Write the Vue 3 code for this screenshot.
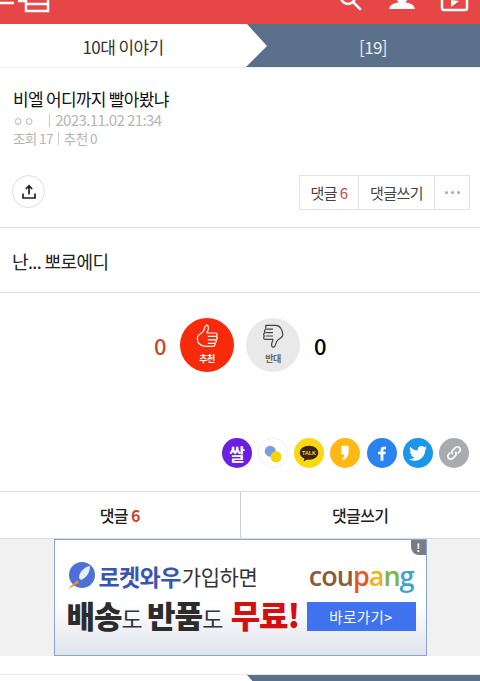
<template>
  <div class="page">
    <header class="topbar">
      <svg class="logo" width="60" height="24" viewBox="0 0 60 24" fill="none" stroke="#fff" stroke-width="2.500">
        <path d="M0 3H14" />
        <path d="M18 1H27" />
        <path d="M26 0V11H48V0" />
        <path d="M27 4H47" />
      </svg>
      <div class="top-icons">
        <svg width="28" height="24" viewBox="0 0 28 24" fill="none" stroke="#fff" stroke-width="2.500">
          <circle cx="11" cy="-3" r="7" />
          <path d="M16 2L23 9" stroke-linecap="round" />
        </svg>
        <svg width="26" height="24" viewBox="0 0 26 24" fill="#fff">
          <circle cx="13" cy="-3" r="6" />
          <path d="M0 9C1 4 7 2 13 2S25 4 26 9Z" />
        </svg>
        <svg width="30" height="24" viewBox="0 0 30 24" fill="none" stroke="#fff" stroke-width="2.500">
          <path d="M3 -2V8Q3 10 5 10H26Q28 10 28 8V-2" />
          <path d="M12 0V7L20 1Z" fill="#fff" stroke="none" />
        </svg>
      </div>
    </header>

    <nav class="crumb">
      <div class="crumb-left">10대 이야기</div>
      <div class="crumb-right">
        <svg class="arrow" width="22" height="43" viewBox="0 0 22 43"><path d="M0 0H1L21 22L0 43Z" fill="#fff" /></svg>
        <span>[19]</span>
      </div>
    </nav>

    <section class="head">
      <h1>비엘 어디까지 빨아봤냐</h1>
      <p class="meta"><span class="nick">ㅇㅇ</span><i class="bar"></i>2023.11.02 21:34</p>
      <p class="meta second">조회 17<i class="bar small"></i>추천 0</p>
    </section>

    <section class="actions">
      <button class="share" aria-label="공유">
        <svg width="16" height="16" viewBox="0 0 16 16" fill="none" stroke="#222" stroke-width="1.700">
          <path d="M8 10.500V2M4.800 5L8 1.800L11.200 5" />
          <path d="M2 9.500V14H14V9.500" />
        </svg>
      </button>
      <div class="btn-group">
        <span class="gbtn first">댓글 <em>6</em></span>
        <span class="gbtn second-btn">댓글쓰기</span>
        <span class="gbtn more"><b></b><b></b><b></b></span>
      </div>
    </section>

    <article class="body">난... 뽀로에디</article>

    <section class="votes">
      <span class="count red">0</span>
      <div class="vote up">
        <svg width="24" height="24" viewBox="0 0 28 28" fill="none" stroke="#fff" stroke-width="1.400" stroke-linejoin="round">
          <path d="M3 15C4 12 8 11 10 8C11 6 11 3 13 1.500C15 1 16 3 15.500 6C15 8 14 9.500 14 10.500H24C26.500 10.500 26.500 14 24.500 14.500C26.500 15 26.500 18 24 18.500C25.500 19.500 25 22 23 22.500C24 24 23 26 21 26H12C9 26 7 25 5 23C3 21 2.500 18 3 15Z" />
          <path d="M15 14.500H24M15 18.500H24M15 22.500H23" />
        </svg>
        <span>추천</span>
      </div>
      <div class="vote down">
        <svg width="24" height="24" viewBox="0 0 28 28" fill="none" stroke="#444" stroke-width="1.400" stroke-linejoin="round">
          <path d="M5 1.500H17C20 1.500 22 3 23 5C25 8 26 11 25 14C24 17 20 17 18 21C17 23 17 26 15 27C13 27.500 12 25.500 12.500 23C13 21 14 19 14 18H5C2.500 18 2.500 14.500 4.500 14C2.500 13.500 2.500 10.500 5 10C3.500 9 4 6.500 6 6C5 4.500 5.500 1.500 7 1.500" />
          <path d="M7 6H14M6 10H14M6 14H14" />
        </svg>
        <span>반대</span>
      </div>
      <span class="count">0</span>
    </section>

    <section class="shares">
      <div class="sns" style="background:#6a1fe0"><span class="sns-text">쌀</span></div>
      <div class="sns blank">
        <svg width="22" height="22" viewBox="0 0 22 22"><circle cx="8.200" cy="9.200" r="5.500" fill="#7d9ce0" /><circle cx="14" cy="14.800" r="5.500" fill="#f7d400" /></svg>
      </div>
      <div class="sns" style="background:#f8d90f">
        <svg width="20" height="17" viewBox="0 0 26 22"><path d="M13 1C6 1 1 5 1 10C1 13.500 3.500 16 7 17.500L6 21.500L10.500 18.800C11 19 12 19 13 19C20 19 25 15 25 10S20 1 13 1Z" fill="#3b2320" /><text x="13" y="13" text-anchor="middle" class="talk">TALK</text></svg>
      </div>
      <div class="sns" style="background:#fdb813">
        <svg width="10" height="16" viewBox="0 0 14 22"><path d="M2 1H12V11C12 15 9 19 5 21L3 19.500C5 17.500 6 15 6 13H2Z" fill="#fff" /></svg>
      </div>
      <div class="sns" style="background:#2a83ee">
        <svg width="10" height="17" viewBox="0 0 14 22"><path d="M5 21V12H1.500V8.500H5V6C5 3 7 1.500 9.500 1.500H12.500V5H10.500C9.300 5 9 5.600 9 6.500V8.500H12.300L11.800 12H9V21Z" fill="#fff" /></svg>
      </div>
      <div class="sns" style="background:#1c96e8">
        <svg width="18" height="15" viewBox="0 0 24 20"><path d="M24 2.400C23 2.800 22 3.100 21.200 3.200C22.300 2.500 23 1.500 23.400 .3C22.400 .9 21.300 1.300 20.200 1.500C19.200 .5 17.900 0 16.500 0C13.800 0 11.600 2.200 11.600 4.900C11.600 5.300 11.600 5.700 11.700 6C7.600 5.800 4 3.900 1.600 .9C1.200 1.600 1 2.500 1 3.400C1 5.100 1.800 6.600 3.200 7.500C2.400 7.500 1.600 7.300 1 6.900C1 9.300 2.700 11.300 4.900 11.700C4.200 11.900 3.400 11.900 2.700 11.800C3.300 13.800 5.200 15.200 7.300 15.200C5.200 16.900 2.600 17.700 0 17.400C2.200 18.800 4.800 19.600 7.500 19.600C16.600 19.600 21.600 12 21.600 5.500V4.900C22.600 4.200 23.400 3.300 24 2.400Z" fill="#fff" /></svg>
      </div>
      <div class="sns" style="background:#a9abae">
        <svg width="18" height="18" viewBox="0 0 22 22" fill="none" stroke="#fff" stroke-width="2"><path d="M9.500 12.500C8 11 8 9 9.500 7.500L12.500 4.500C14 3 16 3 17.500 4.500S19 8 17.500 9.500L15.500 11.500" /><path d="M12.500 9.500C14 11 14 13 12.500 14.500L9.500 17.500C8 19 6 19 4.500 17.500S3 14 4.500 12.500L6.500 10.500" /></svg>
      </div>
    </section>

    <section class="tabs">
      <div class="tab">댓글 <em>6</em></div>
      <div class="tab">댓글쓰기</div>
    </section>

    <section class="ad-wrap">
      <div class="ad">
        <span class="ad-mark">!</span>
        <div class="ad-row">
          <div class="ad-left">
            <svg width="28" height="28" viewBox="0 0 28 28">
              <circle cx="15" cy="13" r="13" fill="#4f6fd8" />
              <path d="M12 16C12 10 17 5 23 4C23 11 19 16 14 18Z" fill="#e4effa" />
              <path d="M1 27L10 18L12 21Z" fill="#f08a24" />
            </svg>
            <span class="rocket">로켓와우</span><span class="join">가입하면</span>
          </div>
          <div class="coupang"><span style="color:#8a5a3c">cou</span><span style="color:#e2572b">p</span><span style="color:#efb320">a</span><span style="color:#7ab648">n</span><span style="color:#3da6c8">g</span></div>
        </div>
        <div class="ad-row lower">
          <div class="ad-copy">
            <strong>배송</strong><span>도</span> <strong>반품</strong><span>도</span> <strong class="free">무료!</strong>
          </div>
          <div class="ad-btn">바로가기&gt;</div>
        </div>
      </div>
    </section>

    <div class="spacer"></div>
    <nav class="crumb bottom">
      <div class="crumb-left"></div>
      <div class="crumb-right">
        <svg class="arrow" width="22" height="43" viewBox="0 0 22 43"><path d="M0 0H1L21 22L0 43Z" fill="#fff" /></svg>
      </div>
    </nav>
  </div>
</template>

<script setup>
</script>

<style>
html, body {
  margin: 0;
  background: #fff;
}
</style>

<style scoped>
.page {
  width: 480px;
  height: 681px;
  overflow: hidden;
  font-family: "Noto Sans CJK KR", "Noto Sans", sans-serif;
  color: #222;
  letter-spacing: -0.6px;
}
.topbar {
  height: 24px;
  background: #e64646;
  display: flex;
  justify-content: space-between;
  overflow: hidden;
}
.top-icons {
  display: flex;
  gap: 24px;
  padding-right: 11px;
}
.crumb {
  display: flex;
  height: 43px;
  border-bottom: 1px solid #f0f0f0;
}
.crumb-left {
  width: 246px;
  text-align: center;
  line-height: 45px;
  font-size: 17px;
  color: #333;
}
.crumb-right {
  flex: 1;
  background: #5a6f89;
  color: #e8edf2;
  position: relative;
  box-sizing: border-box;
  padding-left: 20px;
  text-align: center;
  line-height: 45px;
  font-size: 17px;
}
.arrow {
  position: absolute;
  left: 0;
  top: 0;
}
.head {
  padding: 19px 13px 0;
  height: 96px;
  box-sizing: border-box;
}
h1 {
  margin: 0;
  font-size: 17px;
  font-weight: 400;
  line-height: 24px;
  color: #111;
  letter-spacing: -0.7px;
}
.meta {
  margin: 0;
  height: 18px;
  font-size: 15px;
  line-height: 18px;
  color: #b5b5b5;
}
.meta.second {
  font-size: 13.500px;
}
.nick {
  font-size: 11px;
  letter-spacing: 1px;
}
.bar {
  display: inline-block;
  width: 1px;
  height: 13px;
  background: #ccc;
  margin: 0 5px 0 14px;
  vertical-align: -1px;
}
.bar.small {
  margin: 0 5px;
}
.actions {
  height: 64px;
  box-sizing: border-box;
  padding: 11px 10px 0 12px;
  display: flex;
  justify-content: space-between;
  align-items: flex-start;
  border-bottom: 1px solid #dcdcdc;
}
.share {
  width: 33px;
  height: 33px;
  border: 1px solid #ddd;
  border-radius: 50%;
  background: #fff;
  padding: 0;
  display: flex;
  align-items: center;
  justify-content: center;
}
.btn-group {
  display: flex;
  height: 35px;
  border: 1px solid #e2e2e2;
  box-sizing: border-box;
}
.gbtn {
  display: flex;
  align-items: center;
  justify-content: center;
  font-size: 15px;
  color: #444;
  white-space: pre;
}
.gbtn em, .tab em {
  font-style: normal;
  color: #c8474a;
}
.tab em {
  color: #c9452c;
  font-weight: 700;
}
.first {
  width: 58px;
  border-right: 1px solid #e2e2e2;
}
.second-btn {
  width: 75px;
  border-right: 1px solid #e2e2e2;
}
.more {
  width: 34px;
  gap: 3px;
}
.more b {
  width: 3px;
  height: 3px;
  border-radius: 50%;
  background: #aaa;
}
.body {
  height: 65px;
  box-sizing: border-box;
  padding: 20px 12px 0;
  font-size: 18px;
  line-height: 27px;
  color: #222;
  border-bottom: 1px solid #dcdcdc;
}
.votes {
  height: 101px;
  box-sizing: border-box;
  padding-top: 25px;
  display: flex;
  justify-content: center;
  align-items: flex-start;
  gap: 12px;
}
.count {
  font-size: 22px;
  line-height: 54px;
  font-weight: 500;
  color: #000;
  width: 16px;
  text-align: center;
}
.count.red {
  color: #c9452c;
}
.vote {
  width: 54px;
  height: 54px;
  border-radius: 50%;
  display: flex;
  flex-direction: column;
  align-items: center;
  gap: 5px;
  padding-top: 6px;
  box-sizing: border-box;
  font-size: 9px;
  font-weight: 700;
  line-height: 12px;
}
.vote.up {
  background: #f72b0c;
  color: #fff;
}
.vote.down {
  background: #e9e9e9;
  color: #666;
}
.shares {
  display: flex;
  justify-content: flex-end;
  gap: 6.200px;
  padding: 44px 11px 0 0;
  height: 97px;
  box-sizing: border-box;
}
.sns {
  width: 30px;
  height: 30px;
  border-radius: 50%;
  display: flex;
  align-items: center;
  justify-content: center;
}
.sns.blank {
  background: #fff;
  box-shadow: inset 0 0 0 1px #f0f0f0;
}
.sns-text {
  color: #fff;
  font-size: 17px;
  font-weight: 700;
}
.talk {
  font-size: 7px;
  font-weight: 700;
  fill: #f8d90f;
  letter-spacing: 0;
  font-family: "Liberation Sans", sans-serif;
}
.tabs {
  display: flex;
  height: 48px;
  border-top: 1px solid #dcdcdc;
  border-bottom: 1px solid #dcdcdc;
  box-sizing: border-box;
}
.tab {
  flex: 1;
  display: flex;
  align-items: center;
  justify-content: center;
  white-space: pre;
  font-size: 16px;
  font-weight: 500;
  color: #222;
}
.tab + .tab {
  border-left: 1px solid #ccc;
}
.ad-wrap {
  background: #f1f1f1;
  height: 117px;
  display: flex;
  justify-content: center;
}
.ad {
  width: 373px;
  height: 117px;
  box-sizing: border-box;
  border: 1px solid #86a5dc;
  background: linear-gradient(#fff 55%, #dfe3ea);
  position: relative;
  padding: 21px 10px 0 12px;
}
.ad-mark {
  position: absolute;
  top: 0;
  right: 0;
  width: 15px;
  height: 15px;
  background: #777c85;
  border-bottom-left-radius: 8px;
  color: #fff;
  font-size: 11px;
  font-weight: 700;
  line-height: 15px;
  text-align: center;
}
.ad-row {
  display: flex;
  justify-content: space-between;
  align-items: center;
  height: 30px;
}
.ad-left {
  display: flex;
  align-items: center;
  gap: 4px;
  white-space: nowrap;
}
.rocket {
  font-size: 23px;
  font-weight: 700;
  color: #3a55b0;
  letter-spacing: -0.6px;
}
.join {
  font-size: 21px;
  color: #333;
  margin-left: -3px;
  letter-spacing: -0.4px;
}
.coupang {
  font-family: "Open Sans", sans-serif;
  font-size: 27px;
  font-weight: 600;
  letter-spacing: -1px;
  line-height: 28px;
  margin-right: 2px;
}
.lower {
  margin-top: 10px;
}
.ad-copy {
  font-size: 23px;
  color: #333;
  white-space: nowrap;
  letter-spacing: -0.4px;
  line-height: 34px;
}
.ad-copy strong {
  font-size: 31px;
  font-weight: 900;
  color: #2c2c2c;
  letter-spacing: -1px;
}
.ad-copy .free {
  font-size: 32px;
  color: #d40f0f;
  margin-left: 3px;
}
.ad-btn {
  width: 109px;
  height: 29px;
  background: #3e72ee;
  color: #fff;
  font-size: 14.500px;
  line-height: 29px;
  text-align: center;
  letter-spacing: 0.4px;
}
.spacer {
  height: 18px;
}
.crumb.bottom {
  border-top: 1px solid #e8e8e8;
  border-bottom: none;
}
</style>
